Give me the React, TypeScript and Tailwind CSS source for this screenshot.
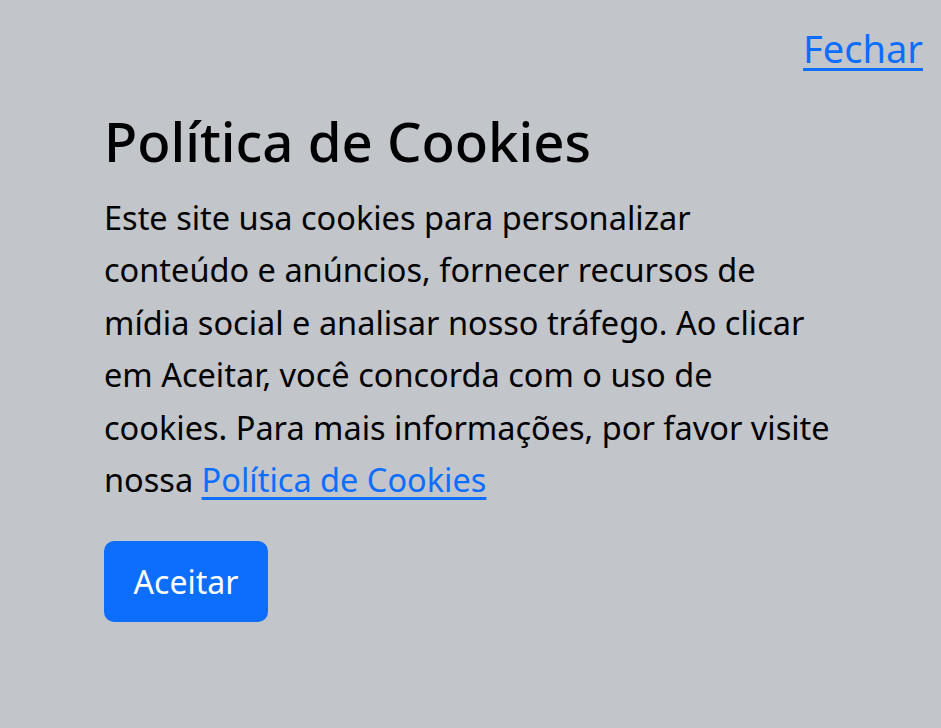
export default function App() {
  return (
    <div
      className="min-h-screen w-full bg-[#c2c5ca] text-black"
      style={{ fontFamily: '"Noto Sans", "Open Sans", sans-serif' }}
    >
      <div className="flex justify-end pr-[18px] pt-[23px]">
        <a href="#" className="text-[38px] leading-[50px] text-[#0d6efd] underline underline-offset-[5px]">
          Fechar
        </a>
      </div>

      <div className="pl-[104px] pt-[35px]">
        <h1 className="text-[54.5px] font-medium leading-[66px]">Política de Cookies</h1>
        <p className="mt-[18px] w-[731px] text-[32.5px] leading-[52.4px]">
          Este site usa cookies para personalizar conteúdo e anúncios, fornecer recursos de mídia social e analisar
          nosso tráfego. Ao clicar em Aceitar, você concorda com o uso de cookies. Para mais informações, por favor
          visite nossa{' '}
          <a href="#" className="text-[#0d6efd] underline underline-offset-[5px]">
            Política de Cookies
          </a>
        </p>
        <button
          type="button"
          className="mt-[35px] h-[81px] w-[164px] rounded-[10px] bg-[#0d6efd] text-[32px] text-white"
        >
          Aceitar
        </button>
      </div>
    </div>
  )
}
